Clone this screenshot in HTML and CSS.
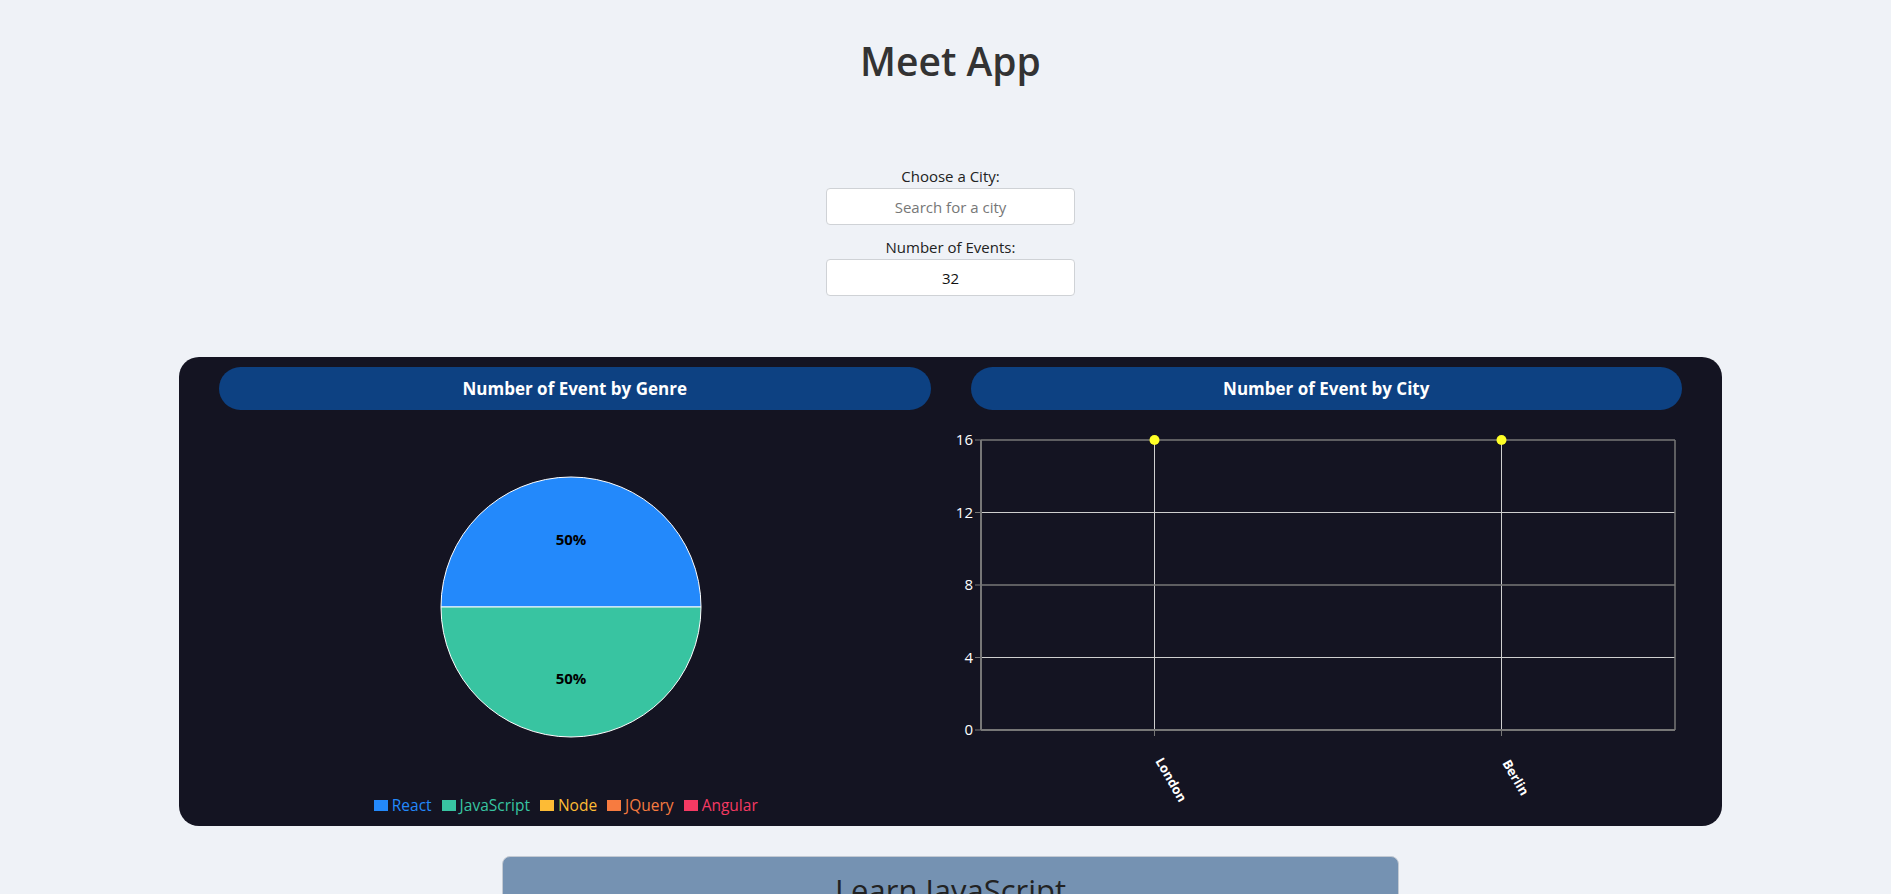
FILE: index.html
```html
<!DOCTYPE html>
<html lang="en">
<head>
<meta charset="utf-8">
<title>Meet App</title>
<link rel="stylesheet" href="styles.css">
</head>
<body>
<div class="app">
  <h1 class="title">Meet App</h1>

  <div class="field field-city">
    <label class="field-label" for="city">Choose a City:</label>
    <input class="field-input" id="city" type="text" placeholder="Search for a city">
  </div>

  <div class="field field-number">
    <label class="field-label" for="num">Number of Events:</label>
    <input class="field-input" id="num" type="text" value="32">
  </div>

  <div class="charts-panel">
    <div class="chart-col">
      <div class="chart-pill">Number of Event by Genre</div>
      <svg class="pie-svg" width="711" height="385" viewBox="0 0 711 385">
        <path d="M 222 197 A 130 130 0 0 1 482 197 Z" fill="#2389fb" stroke="#ffffff" stroke-width="1"/>
        <path d="M 482 197 A 130 130 0 0 1 222 197 Z" fill="#38c4a1" stroke="#ffffff" stroke-width="1"/>
        <text class="pie-label" x="352" y="135">50%</text>
        <text class="pie-label" x="352" y="274">50%</text>
      </svg>
      <ul class="legend">
        <li class="legend-item legend-react"><span class="legend-swatch"></span>React</li>
        <li class="legend-item legend-js"><span class="legend-swatch"></span>JavaScript</li>
        <li class="legend-item legend-node"><span class="legend-swatch"></span>Node</li>
        <li class="legend-item legend-jquery"><span class="legend-swatch"></span>JQuery</li>
        <li class="legend-item legend-angular"><span class="legend-swatch"></span>Angular</li>
      </ul>
    </div>

    <div class="chart-col">
      <div class="chart-pill">Number of Event by City</div>
      <svg class="scatter-svg" width="711" height="405" viewBox="0 0 711 405">
        <line x1="10" y1="102.5" x2="704" y2="102.5" stroke="#cfcfcf" stroke-width="1"/>
        <line x1="10" y1="247.5" x2="704" y2="247.5" stroke="#cfcfcf" stroke-width="1"/>
        <line x1="183.5" y1="30" x2="183.5" y2="320" stroke="#cfcfcf" stroke-width="1"/>
        <line x1="530.5" y1="30" x2="530.5" y2="320" stroke="#cfcfcf" stroke-width="1"/>
        <line x1="10" y1="175" x2="704" y2="175" stroke="#777777" stroke-width="1.5"/>
        <line x1="10" y1="30" x2="704" y2="30" stroke="#777777" stroke-width="1.5"/>
        <line x1="704" y1="30" x2="704" y2="320" stroke="#777777" stroke-width="1.5"/>
        <line x1="10" y1="30" x2="10" y2="320" stroke="#777777" stroke-width="2"/>
        <line x1="10" y1="320" x2="704" y2="320" stroke="#777777" stroke-width="2"/>
        <line x1="4" y1="30" x2="10" y2="30" stroke="#777777" stroke-width="1"/>
        <line x1="4" y1="102.5" x2="10" y2="102.5" stroke="#777777" stroke-width="1"/>
        <line x1="4" y1="175" x2="10" y2="175" stroke="#777777" stroke-width="1"/>
        <line x1="4" y1="247.5" x2="10" y2="247.5" stroke="#777777" stroke-width="1"/>
        <line x1="4" y1="320" x2="10" y2="320" stroke="#777777" stroke-width="1"/>
        <text class="axis-y" x="2" y="35">16</text>
        <text class="axis-y" x="2" y="107.5">12</text>
        <text class="axis-y" x="2" y="180">8</text>
        <text class="axis-y" x="2" y="252.5">4</text>
        <text class="axis-y" x="2" y="325">0</text>
        <line x1="183.5" y1="320" x2="183.5" y2="326" stroke="#777777" stroke-width="1"/>
        <line x1="530.5" y1="320" x2="530.5" y2="326" stroke="#777777" stroke-width="1"/>
        <text class="axis-x" x="184" y="351" transform="rotate(60 184 351)">London</text>
        <text class="axis-x" x="531" y="353" transform="rotate(60 531 353)">Berlin</text>
        <circle cx="183.5" cy="30" r="5" fill="#ffff26"/>
        <circle cx="530.5" cy="30" r="5" fill="#ffff26"/>
      </svg>
    </div>
  </div>

  <div class="learn-card">
    <h2 class="learn-title">Learn JavaScript</h2>
  </div>
</div>
</body>
</html>
```

FILE: styles.css
```css
html, body {
  margin: 0;
  padding: 0;
}

body {
  background: #eff2f7;
  font-family: "Open Sans", "Noto Sans", "DejaVu Sans", sans-serif;
  color: #222;
  overflow: hidden;
}

.app {
  display: flex;
  flex-direction: column;
  align-items: center;
  padding-left: 10px;
}

.title {
  margin: 34px 0 0;
  font-size: 39px;
  font-weight: 600;
  line-height: normal;
  color: #333;
}

.field {
  display: flex;
  flex-direction: column;
  align-items: center;
}

.field-city {
  margin-top: 79px;
}

.field-number {
  margin-top: 12px;
}

.field-label {
  font-size: 15px;
  line-height: 20px;
  color: #222;
}

.field-input {
  margin-top: 2px;
  width: 249px;
  height: 37px;
  box-sizing: border-box;
  border: 1px solid #cfd2d6;
  border-radius: 4px;
  background: #fff;
  text-align: center;
  font-family: "Open Sans", "Noto Sans", sans-serif;
  font-size: 15px;
  color: #111;
  padding: 0 8px;
}

.field-input::placeholder {
  color: #777;
}

.charts-panel {
  margin-top: 61px;
  width: 1543px;
  box-sizing: border-box;
  background: #141422;
  border-radius: 20px;
  padding: 10px 40px 11px;
  display: grid;
  grid-template-columns: 1fr 1fr;
  column-gap: 40px;
}

.chart-col {
  display: flex;
  flex-direction: column;
  min-width: 0;
}

.chart-pill {
  height: 43px;
  border-radius: 22px;
  background: #0d4182;
  color: #fff;
  font-weight: 700;
  font-size: 17px;
  display: flex;
  align-items: center;
  justify-content: center;
}

.pie-svg,
.scatter-svg {
  display: block;
  overflow: visible;
}

.pie-label {
  font-family: "Open Sans", "Noto Sans", sans-serif;
  font-size: 15px;
  font-weight: 700;
  fill: #000;
  text-anchor: middle;
}

.axis-y {
  font-family: "Open Sans", "Noto Sans", sans-serif;
  font-size: 15px;
  fill: #fff;
  text-anchor: end;
}

.axis-x {
  font-family: "Open Sans", "Noto Sans", sans-serif;
  font-size: 13px;
  font-weight: 700;
  fill: #fff;
  text-anchor: start;
}

.legend {
  list-style: none;
  margin: 0;
  padding: 0 8px 0 0;
  height: 20px;
  display: flex;
  justify-content: center;
  align-items: center;
  font-size: 15.5px;
  line-height: 20px;
}

.legend-item {
  display: flex;
  align-items: center;
  margin-right: 10px;
}

.legend-swatch {
  width: 14px;
  height: 11px;
  margin-right: 4px;
  background: currentColor;
}

.legend-react { color: #2389fb; }
.legend-js { color: #38c4a1; }
.legend-node { color: #fdbb35; }
.legend-jquery { color: #f77b40; }
.legend-angular { color: #f53a63; }

.learn-card {
  margin-top: 30px;
  width: 897px;
  height: 120px;
  box-sizing: border-box;
  background: #7592b2;
  border: 1px solid #c3cad3;
  border-radius: 8px;
  display: flex;
  justify-content: center;
}

.learn-title {
  margin: 12px 0 0;
  font-size: 31px;
  font-weight: 500;
  line-height: normal;
  color: #222;
}
```
